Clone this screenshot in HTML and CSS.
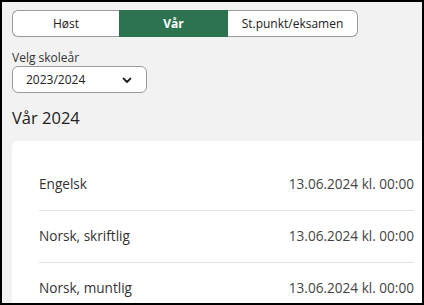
FILE: index.html
```html
<!DOCTYPE html>
<html lang="no">
<head>
    <meta charset="UTF-8">
    <meta name="viewport" content="width=device-width, initial-scale=1.0">
    <title>Eksamen</title>
    <link rel="stylesheet" href="styles.css">
</head>
<body>
    <div class="frame">
        <ul class="tab_lst">
            <li class="t1"><a href="#host">Høst</a></li>
            <li class="t2 is_on"><a href="#var">Vår</a></li>
            <li class="t3"><a href="#eks">St.punkt/eksamen</a></li>
        </ul>

        <label class="lbl" for="year">Velg skoleår</label>
        <div class="sel">
            <span>2023/2024</span>
            <svg width="10" height="7" viewBox="0 0 10 7"><path d="M1.5 1.5 L5 5 L8.5 1.5" fill="none" stroke="#222" stroke-width="1.8" stroke-linecap="round" stroke-linejoin="round"/></svg>
        </div>

        <h2 class="tit">Vår 2024</h2>

        <div class="card">
            <div class="row"><span>Engelsk</span><span class="date">13.06.2024 kl. 00:00</span></div>
            <div class="row"><span>Norsk, skriftlig</span><span class="date">13.06.2024 kl. 00:00</span></div>
            <div class="row"><span>Norsk, muntlig</span><span class="date">13.06.2024 kl. 00:00</span></div>
        </div>
    </div>
</body>
</html>
```

FILE: styles.css
```css
/* 초기화 */
body,ul,h2{margin: 0; padding: 0;}
ul{list-style: none;}
a{text-decoration: none; color: #222;}

body{font-family: "Open Sans", "Liberation Sans", sans-serif; color: #333;}

/* 레이아웃 */
.frame{
    width: 424px; height: 305px; box-sizing: border-box;
    border: 2px solid #000;
    background-color: #f2f2f2;
    padding: 8px 0 0 10px;
    overflow: hidden;
}

.tab_lst{display: flex; height: 27px;}
.tab_lst li a{
    display: block; height: 27px; box-sizing: border-box;
    line-height: 25px; text-align: center; font-size: 12px;
    background-color: #fff; border: 1px solid #9a9a9a;
}
.tab_lst .t1 a{width: 107px; border-radius: 6px 0 0 6px; border-right: 0;}
.tab_lst .t2 a{width: 109px;}
.tab_lst .t3 a{width: 130px; border-radius: 0 6px 6px 0; border-left: 0;}
.tab_lst li.is_on a{
    background-color: #2e7350; border-color: #2e7350;
    color: #fff; font-weight: bold;
}

.lbl{display: block; font-size: 12px; margin-top: 12px; line-height: 17px; color: #333;}

.sel{
    display: flex; align-items: center; justify-content: space-between;
    width: 135px; height: 27px; box-sizing: border-box;
    border: 1px solid #9a9a9a; border-radius: 6px; background-color: #fff;
    padding: 0 14px 0 13px; font-size: 12px; color: #222;
}
.sel svg{margin-top: 1px;}

.tit{font-size: 16.5px; font-weight: normal; color: #222; margin-top: 14px; line-height: 22px;}

.card{
    margin-top: 12px; width: 440px;
    background-color: #fff; border-radius: 6px 0 0 0;
    padding: 18px 0 0 27px;
}
.row{
    display: flex; justify-content: space-between; align-items: center;
    width: 375px; height: 52px; box-sizing: border-box; padding-bottom: 3px;
    font-size: 13.6px; color: #333;
    border-bottom: 1px solid #e2e2e2;
}
.row .date{color: #444;}
```
